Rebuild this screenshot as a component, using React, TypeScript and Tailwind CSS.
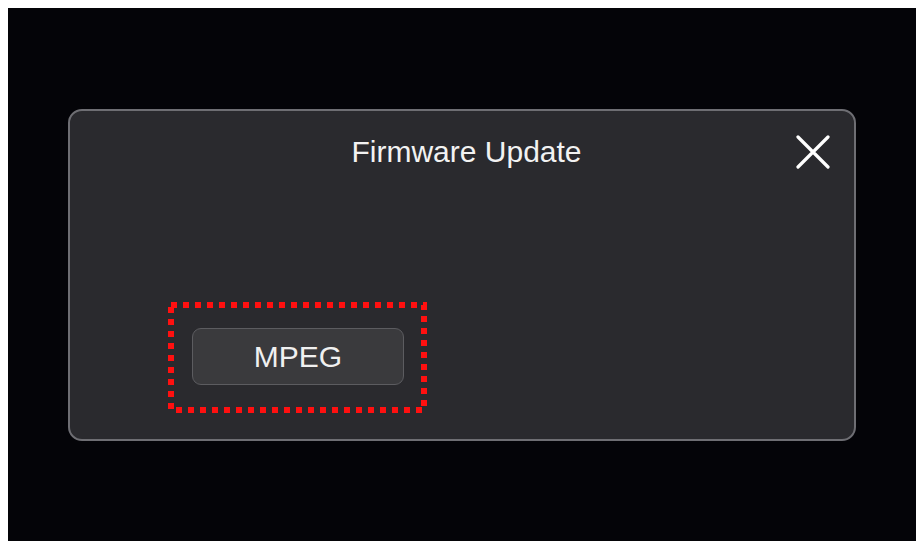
export default function App() {
  return (
    <div className="w-[921px] h-[546px] bg-white pt-2 pl-2 pr-[5px] pb-[5px]" style={{ fontFamily: '"Liberation Sans", Arial, sans-serif' }}>
      <div className="w-full h-full bg-[#040408] pt-[101px] pl-[60px]">
        <div className="relative w-[788px] h-[332px] rounded-[14px] border-2 border-[#6e6e73] bg-[#2a2a2e]">
          <h2 className="text-center text-[30px] leading-[34px] text-[#f2f2f2] pt-[24px] pl-[9px]">Firmware Update</h2>
          <button className="absolute right-[24px] top-[24px] w-[34px] h-[34px] text-white">
            <svg viewBox="0 0 34 34" width="34" height="34" fill="none" stroke="currentColor" strokeWidth="3.2" strokeLinecap="round">
              <path d="M2 2 L32 32 M32 2 L2 32" />
            </svg>
          </button>
          <div className="relative ml-[98px] mt-[133px] w-[259px] h-[111px] pt-[26px] pl-[24px]">
            <svg className="absolute inset-0" width="259" height="111" fill="none">
              <rect x="3" y="3" width="253" height="105" stroke="#ff1010" strokeWidth="6" strokeDasharray="6 6" />
            </svg>
            <div className="relative w-[212px] h-[57px] rounded-[9px] border border-[#5c5c60] bg-[#3a3a3d] flex items-center justify-center text-[30px] text-[#f0f0f0]">
              MPEG
            </div>
          </div>
        </div>
      </div>
    </div>
  );
}
